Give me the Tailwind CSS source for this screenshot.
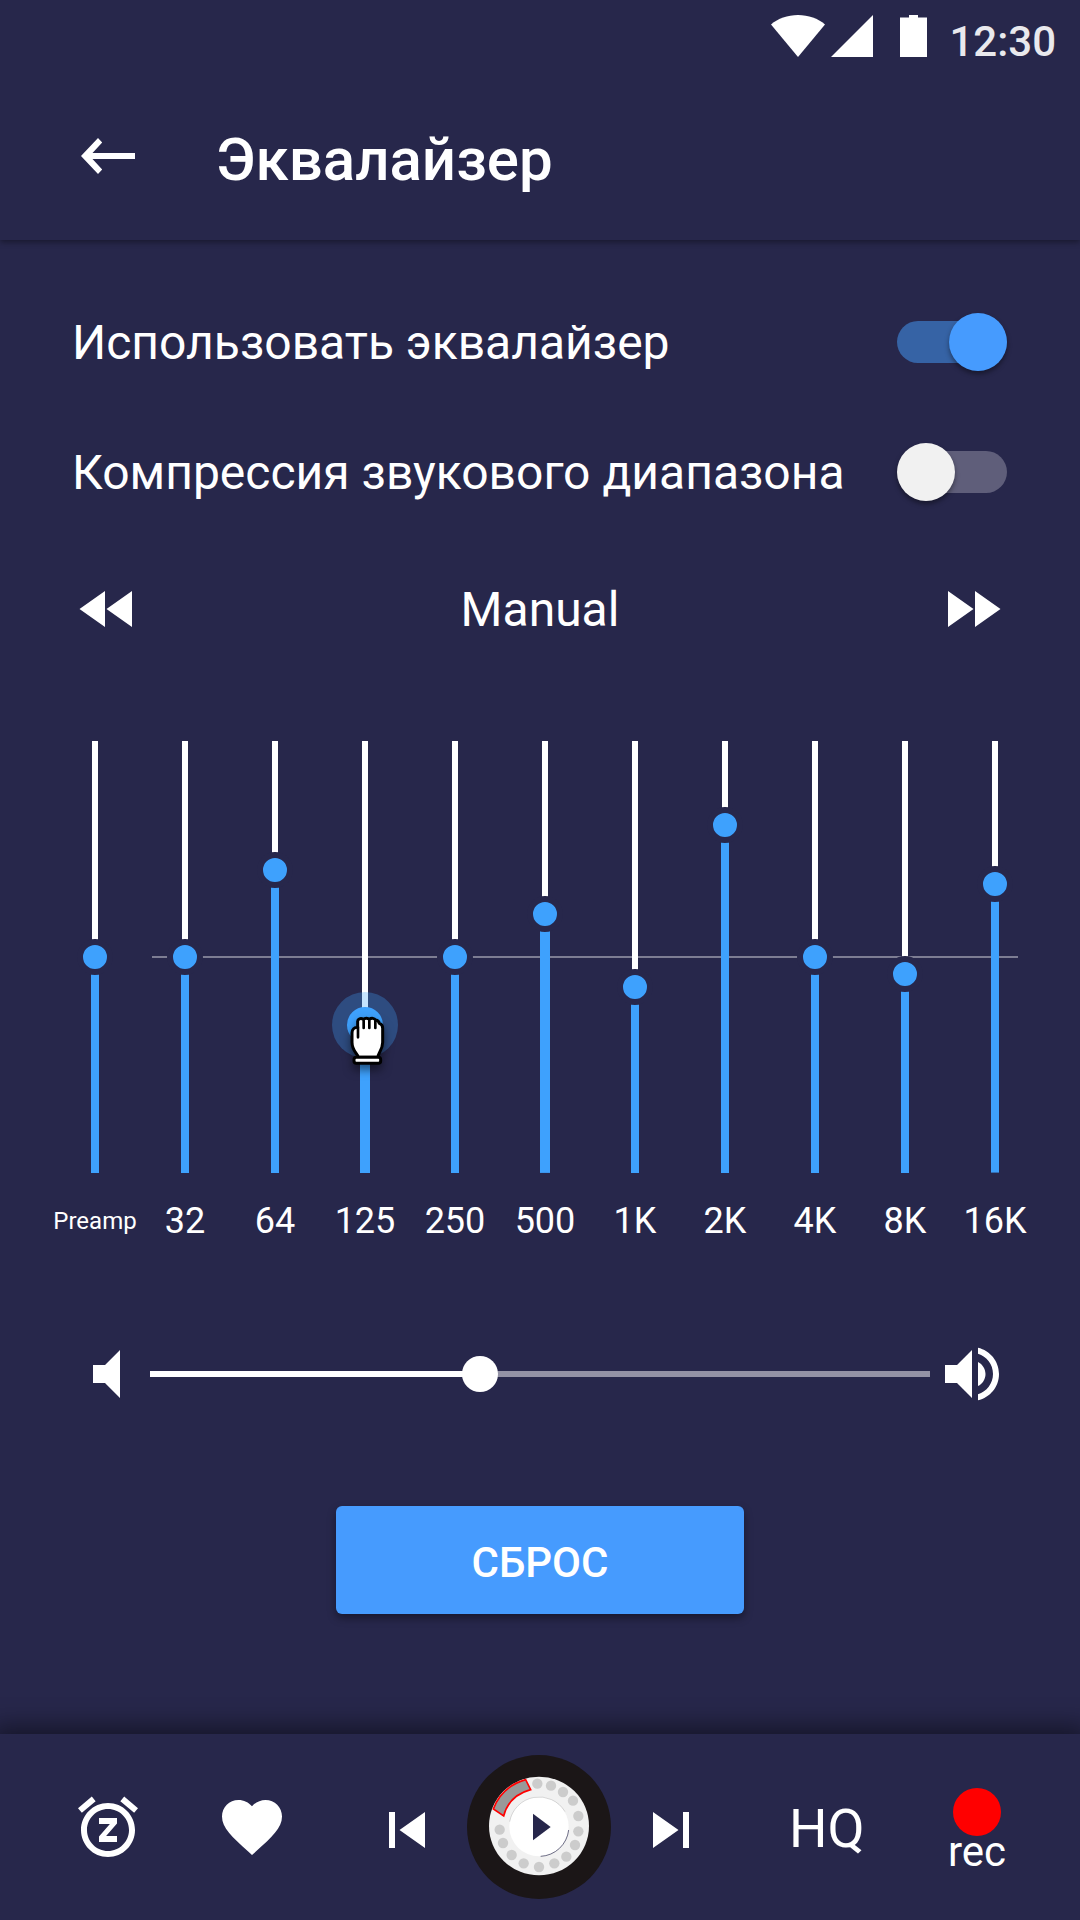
<!DOCTYPE html>
<html lang="ru">
<head>
<meta charset="utf-8">
<meta name="viewport" content="width=device-width, initial-scale=1">
<title>Эквалайзер</title>
<script src="https://cdn.jsdelivr.net/npm/@tailwindcss/browser@4"></script>
</head>
<body class="flex min-h-screen flex-col bg-[#27274b] font-['Roboto',sans-serif] text-white">

<header class="shadow-[0_2px_6px_rgba(0,0,0,0.4)]">
  <div class="flex h-18 items-start justify-end pr-6">
    <svg class="mt-[15px] h-[42px] w-[54px]" viewBox="0 0 54 42" fill="#fff" aria-hidden="true"><path d="M0 9.500C7 3.500 16.500 0 27 0s20 3.500 27 9.500L27 42z"/></svg>
    <svg class="mt-[15px] ml-1.5 h-[42px] w-[42px]" viewBox="0 0 42 42" fill="#fff" aria-hidden="true"><path d="M42 0v42H0z"/></svg>
    <svg class="mt-[15px] ml-[27px] h-[42px] w-[27px]" viewBox="0 0 27 42" fill="#fff" aria-hidden="true"><path d="M9 0h9v2.500h9V42H0V2.500h9z"/></svg>
    <time class="mt-[18px] ml-[22px] text-[42px] leading-12 font-medium text-[#e9e9ed]">12:30</time>
  </div>
  <div class="flex h-42 items-center px-18">
    <button type="button" aria-label="Назад" class="mr-18 h-12 w-18">
      <svg class="h-12 w-18" viewBox="0 0 72 48" fill="#fff" aria-hidden="true"><path d="M63 21H20.500l9.700-10.500L26 6 9 24l17 18 4.200-4.500L20.500 27H63z"/></svg>
    </button>
    <h1 class="pt-2 text-[60px] leading-18 font-medium">Эквалайзер</h1>
  </div>
</header>

<main class="flex grow flex-col pt-[37px]">
  <div class="pr-[73px] pl-18 text-[48px] leading-16">
    <label class="flex h-[130px] items-center justify-between">
      <span class="pt-0.5">Использовать эквалайзер</span>
      <input type="checkbox" role="switch" checked class="relative h-[42px] w-[110px] shrink-0 appearance-none rounded-full bg-[#5f5e7a] before:absolute before:-top-2 before:left-0 before:size-[58px] before:rounded-full before:bg-[#f1f1f1] before:shadow-[0_3px_5px_rgba(0,0,0,0.4)] checked:bg-[#3663a5] checked:before:left-[52px] checked:before:bg-[#469bfe]">
    </label>
    <label class="flex h-[130px] items-center justify-between">
      <span class="pt-0.5">Компрессия звукового диапазона</span>
      <input type="checkbox" role="switch" class="relative h-[42px] w-[110px] shrink-0 appearance-none rounded-full bg-[#5f5e7a] before:absolute before:-top-2 before:left-0 before:size-[58px] before:rounded-full before:bg-[#f1f1f1] before:shadow-[0_3px_5px_rgba(0,0,0,0.4)] checked:bg-[#3663a5] checked:before:left-[52px] checked:before:bg-[#469bfe]">
    </label>
  </div>

  <div class="mt-9 flex items-center justify-between px-18">
    <button type="button" aria-label="Предыдущий пресет"><svg class="size-18" viewBox="0 0 24 24" fill="#fff" aria-hidden="true"><path d="M11 18V6l-8.500 6 8.500 6zm.5-6l8.500 6V6l-8.500 6z"/></svg></button>
    <output class="pt-0.5 text-[48px] leading-16">Manual</output>
    <button type="button" aria-label="Следующий пресет"><svg class="size-18" viewBox="0 0 24 24" fill="#fff" aria-hidden="true"><path d="M4 18l8.500-6L4 6v12zm9-12v12l8.500-6L13 6z"/></svg></button>
  </div>

  <!-- Bands: -12…+12 dB over the travel of the 36px thumb; --v is the gain, --w the width of the filled part -->
  <section id="bands" aria-label="Полосы" class="relative mt-24 grid grid-cols-11 pr-10 pl-[50px] text-[36px] leading-10 [&_input]:block [&_input]:h-[432px] [&_input]:w-9 [&_input]:appearance-none [&_input]:bg-[linear-gradient(#3ea1fd,#3ea1fd),linear-gradient(#fff,#fff)] [&_input]:bg-[position:bottom,top] [&_input]:bg-[size:var(--w,8px)_calc(50%+var(--v)*(100%-36px)/24),6px_calc(50%-var(--v)*(100%-36px)/24)] [&_input]:bg-no-repeat [&_input]:[direction:rtl] [&_input]:[writing-mode:vertical-lr] [&_input::-webkit-slider-thumb]:size-9 [&_input::-webkit-slider-thumb]:appearance-none [&_input::-webkit-slider-thumb]:rounded-full [&_input::-webkit-slider-thumb]:border-6 [&_input::-webkit-slider-thumb]:border-solid [&_input::-webkit-slider-thumb]:border-[#27274b] [&_input::-webkit-slider-thumb]:bg-[#3ea1fd] [&_label]:relative [&_label]:flex [&_label]:flex-col [&_label]:items-center [&_span]:flex [&_span]:h-24 [&_span]:items-center">
    <div class="absolute top-[215px] right-[62px] left-[152px] h-0.5 bg-white/40"></div>
    <label><input type="range" min="-12" max="12" step="0.1" value="0" style="--v:0"><span class="text-[24px]">Preamp</span></label>
    <label><input type="range" min="-12" max="12" step="0.1" value="0" style="--v:0"><span>32</span></label>
    <label><input type="range" min="-12" max="12" step="0.1" value="5.3" style="--v:5.3"><span>64</span></label>
    <label class="[&_input::-webkit-slider-thumb]:!border-[#3ea1fd] [&_input::-webkit-slider-thumb]:shadow-[0_0_0_15px_rgba(62,161,253,0.3)]"><input type="range" min="-12" max="12" step="0.1" value="-4.1" style="--v:-4.1;--w:10px"><span>125</span>
      <svg class="pointer-events-none absolute top-[275px] h-[56px] w-[44px] drop-shadow-[0_5px_5px_rgba(0,0,0,0.5)]" viewBox="0 0 132 168" fill="#fff" stroke="#000" stroke-width="9" stroke-linejoin="round" stroke-linecap="round" aria-hidden="true">
        <path d="M46 124c-1-11-19-17-19-45V51c0-10 7-17 17-17V16c0-7 9-11 17-6 5-5 14-4 18 0 7-5 15-3 19 2 8 1 10 5 11 10 8 2 10 7 10 15v42c0 24-15 32-14 45z"/>
        <path d="M45 34v30M62 14v22M79 14v22M97 16v20" fill="none" stroke-width="8"/>
        <rect x="33" y="124" width="80" height="18" rx="7"/>
      </svg>
    </label>
    <label><input type="range" min="-12" max="12" step="0.1" value="0" style="--v:0"><span>250</span></label>
    <label><input type="range" min="-12" max="12" step="0.1" value="2.6" style="--v:2.6;--w:10px"><span>500</span></label>
    <label><input type="range" min="-12" max="12" step="0.1" value="-1.8" style="--v:-1.8"><span>1K</span></label>
    <label><input type="range" min="-12" max="12" step="0.1" value="8" style="--v:8"><span>2K</span></label>
    <label><input type="range" min="-12" max="12" step="0.1" value="0" style="--v:0"><span>4K</span></label>
    <label><input type="range" min="-12" max="12" step="0.1" value="-1" style="--v:-1"><span>8K</span></label>
    <label><input type="range" min="-12" max="12" step="0.1" value="4.4" style="--v:4.4"><span>16K</span></label>
  </section>

  <div class="mt-[69px] flex items-center gap-1.5 px-18">
    <svg class="size-18 shrink-0" viewBox="0 0 24 24" fill="#fff" aria-hidden="true"><path d="M7 9v6h4l5 5V4l-5 5H7z"/></svg>
    <input id="volume" type="range" min="0" max="100" value="42" aria-label="Громкость" style="--v:42" class="h-9 min-w-0 grow appearance-none bg-[linear-gradient(#fff,#fff),linear-gradient(#9392a5,#9392a5)] bg-[position:left,left] bg-[size:calc(var(--v)*1%)_6px,100%_6px] bg-no-repeat [&::-webkit-slider-thumb]:size-9 [&::-webkit-slider-thumb]:appearance-none [&::-webkit-slider-thumb]:rounded-full [&::-webkit-slider-thumb]:bg-white">
    <svg class="size-18 shrink-0" viewBox="0 0 24 24" fill="#fff" aria-hidden="true"><path d="M3 9v6h4l5 5V4L7 9H3zm13.500 3c0-1.770-1.020-3.290-2.500-4.030v8.050c1.480-.73 2.500-2.250 2.500-4.020zM14 3.230v2.060c2.890.86 5 3.540 5 6.710s-2.110 5.850-5 6.710v2.060c4.010-.91 7-4.490 7-8.770s-2.990-7.860-7-8.770z"/></svg>
  </div>

  <button id="reset" type="button" class="mx-auto mt-24 mb-30 h-27 w-102 rounded-md bg-[#469bfe] pt-1.5 text-[42px] leading-12 font-medium shadow-[0_4px_8px_rgba(0,0,0,0.4)]">СБРОС</button>
</main>

<footer class="flex h-[186px] items-center justify-between pr-[67px] pl-18 shadow-[0_0_24px_8px_rgba(0,0,0,0.45)]">
  <div class="flex gap-18">
    <button type="button" aria-label="Таймер сна"><svg class="size-18" viewBox="0 0 24 24" fill="#fff" aria-hidden="true"><path d="M7.880 3.390L6.600 1.860 2 5.710l1.290 1.530 4.590-3.850zM22 5.720l-4.600-3.860-1.290 1.530 4.600 3.860L22 5.720zM12 4c-4.970 0-9 4.030-9 9s4.020 9 9 9c4.970 0 9-4.030 9-9s-4.030-9-9-9zm0 16c-3.870 0-7-3.130-7-7s3.130-7 7-7 7 3.130 7 7-3.130 7-7 7zm-3-9h3.630L9 15.200V17h6v-2h-3.630L15 10.800V9H9v2z"/></svg></button>
    <button type="button" aria-label="В избранное"><svg class="size-18" viewBox="0 0 24 24" fill="#fff" aria-hidden="true"><path d="M12 21.350l-1.450-1.320C5.400 15.360 2 12.280 2 8.500 2 5.420 4.420 3 7.500 3c1.740 0 3.410.81 4.500 2.090C13.090 3.810 14.760 3 16.500 3 19.580 3 22 5.420 22 8.500c0 3.780-3.400 6.860-8.550 11.540L12 21.350z"/></svg></button>
  </div>
  <div class="flex items-center gap-6">
    <button type="button" aria-label="Назад по списку" class="pt-1.5"><svg class="size-18" viewBox="0 0 24 24" fill="#fff" aria-hidden="true"><path d="M6 6h2v12H6zm3.500 6l8.500 6V6z"/></svg></button>
    <button type="button" aria-label="Играть">
      <svg class="size-36" viewBox="54 45 432 432" aria-hidden="true">
        <circle cx="270" cy="261" r="216" fill="#1b1617"/>
        <ellipse cx="270" cy="258" rx="150" ry="148" fill="#f1f1f1"/>
        <circle cx="270" cy="260" r="89" fill="#fff"/>
        <path d="M182 245A90 90 0 0 1 348 215" fill="none" stroke="#b5b5b5" stroke-width="1.500"/>
        <path d="M359 270A89 89 0 0 1 275 349" fill="none" stroke="#27274b" stroke-width="2"/>
        <g fill="#ccc"><circle cx="265" cy="131" r="15.500"/><circle cx="306" cy="137" r="15.500"/><circle cx="342" cy="156" r="15.500"/><circle cx="372" cy="182" r="15.500"/><circle cx="388" cy="228" r="15.500"/><circle cx="388" cy="274" r="15.500"/><circle cx="378" cy="315" r="15.500"/><circle cx="352" cy="350" r="15.500"/><circle cx="316" cy="370" r="15.500"/><circle cx="270" cy="381" r="15.500"/><circle cx="224" cy="370" r="15.500"/><circle cx="188" cy="345" r="15.500"/><circle cx="162" cy="309" r="15.500"/><circle cx="152" cy="269" r="15.500"/></g>
        <path d="M133 207C149 164 182 133 230 119L245 149C201 161 174 189 164 228Z" fill="#999" stroke="#f00" stroke-width="5"/>
        <path d="M252 221L305 261L252 301Z" fill="#27274b"/>
      </svg>
    </button>
    <button type="button" aria-label="Вперёд по списку" class="pt-1.5"><svg class="size-18" viewBox="0 0 24 24" fill="#fff" aria-hidden="true"><path d="M6 18l8.500-6L6 6v12zM16 6v12h2V6h-2z"/></svg></button>
  </div>
  <div class="flex items-center gap-20">
    <button type="button" class="w-18 pt-1 text-[54px] leading-16">HQ</button>
    <button type="button" class="flex w-18 flex-col items-center pt-2.5 text-[42px] leading-12"><span class="size-12 rounded-full bg-[#f00]"></span><span class="-mt-2">rec</span></button>
  </div>
</footer>

<script>
  const ranges = document.querySelectorAll('input[type=range]');
  ranges.forEach(r => r.addEventListener('input', () => r.style.setProperty('--v', r.value)));
  document.getElementById('reset').addEventListener('click', () => {
    document.querySelectorAll('#bands input').forEach(r => { r.value = 0; r.style.setProperty('--v', 0); });
  });
</script>
</body>
</html>
